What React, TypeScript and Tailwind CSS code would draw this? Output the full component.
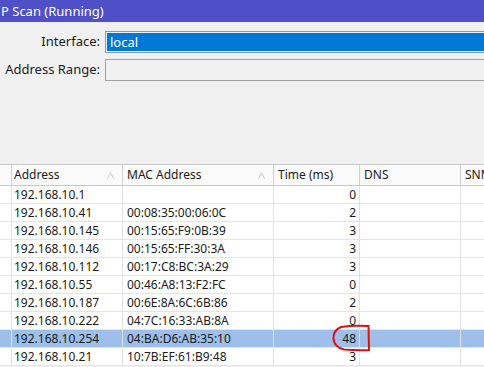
import React from "react";

const rows: [string, string, string][] = [
  ["192.168.10.1", "", "0"],
  ["192.168.10.41", "00:08:35:00:06:0C", "2"],
  ["192.168.10.145", "00:15:65:F9:0B:39", "3"],
  ["192.168.10.146", "00:15:65:FF:30:3A", "3"],
  ["192.168.10.112", "00:17:C8:BC:3A:29", "3"],
  ["192.168.10.55", "00:46:A8:13:F2:FC", "0"],
  ["192.168.10.187", "00:6E:8A:6C:6B:86", "2"],
  ["192.168.10.222", "04:7C:16:33:AB:8A", "0"],
  ["192.168.10.254", "04:BA:D6:AB:35:10", "48"],
  ["192.168.10.21", "10:7B:EF:61:B9:48", "3"],
];

const SortMark = () => (
  <svg width="7" height="7" viewBox="0 0 7 7" className="shrink-0">
    <path d="M0.5 6.5 L3.5 0.8 L6.5 6.5" fill="none" stroke="#c9c9c9" strokeWidth="1" />
  </svg>
);

export default function App() {
  return (
    <div
      className="relative w-[484px] h-[367px] overflow-hidden bg-[#f0f0f0] text-[#1a1a1a]"
      style={{ fontFamily: '"Noto Sans", "Open Sans", sans-serif' }}
    >
      <div className="h-[22px] bg-[#4f4fc7] text-white text-[13px] leading-[22px] pl-[1px]">
        P Scan (Running)
      </div>
      <div className="h-[142px] pt-[9px] flex flex-col gap-[6px]">
        <div className="flex items-center h-[22px]">
          <div className="w-[100px] shrink-0 text-right text-[13px]">Interface:</div>
          <div className="ml-[5px] w-[400px] shrink-0 h-[22px] border border-[#7f9db9] p-[1px] bg-[#e8f2fb]">
            <div className="h-full bg-[#0078d7] text-white text-[13px] leading-[18px] pl-[3px]">local</div>
          </div>
        </div>
        <div className="flex items-center h-[22px]">
          <div className="w-[100px] shrink-0 text-right text-[13px]">Address Range:</div>
          <div className="ml-[5px] w-[400px] shrink-0 h-[22px] border border-[#a0a0a0] bg-[#f0f0f0]" />
        </div>
      </div>
      <div className="text-[12px] bg-white">
        <div className="flex h-[22px] border-t border-b border-[#c8c8c8] bg-[#fafafa] leading-[20px]">
          <div className="w-[12px] border-r border-[#d0d0d0]" />
          <div className="w-[111px] border-r border-[#d0d0d0] pl-[2px] pr-[8px] flex items-center justify-between">
            <span>Address</span>
            <SortMark />
          </div>
          <div className="w-[151px] border-r border-[#d0d0d0] pl-[4px] pr-[8px] flex items-center justify-between">
            <span>MAC Address</span>
            <SortMark />
          </div>
          <div className="w-[86px] border-r border-[#d0d0d0] pl-[4px]">Time (ms)</div>
          <div className="w-[101px] border-r border-[#d0d0d0] pl-[4px]">DNS</div>
          <div className="flex-1 pl-[4px] whitespace-nowrap overflow-hidden">SNMP</div>
        </div>
        {rows.map(([ip, mac, t], i) => {
          const sel = i === 8;
          return (
            <div
              key={ip}
              className={`flex h-[18px] border-b border-[#e4e4e4] leading-[17px] ${sel ? "bg-[#9dbfe9]" : "bg-white"}`}
            >
              <div className="w-[12px] border-r border-[#e0e0e0]" />
              <div className="w-[111px] border-r border-[#e0e0e0] pl-[2px]">{ip}</div>
              <div className="w-[151px] border-r border-[#e0e0e0] pl-[4px]">{mac}</div>
              <div className="w-[86px] border-r border-[#e0e0e0] pr-[3px] text-right">{t}</div>
              <div className="w-[101px] border-r border-[#e0e0e0]" />
              <div className="flex-1" />
            </div>
          );
        })}
      </div>
      <svg className="absolute left-0 top-0 pointer-events-none" width="484" height="367">
        <path
          d="M341 327 C350 325.5 360 325.5 368.5 326 L369 350 C360 350.5 350 350 344 349.5 C338 348.5 333.5 344 333.5 338 C333.5 333 336 329 341 327 Z"
          fill="none"
          stroke="#e01010"
          strokeWidth="2"
        />
      </svg>
    </div>
  );
}
